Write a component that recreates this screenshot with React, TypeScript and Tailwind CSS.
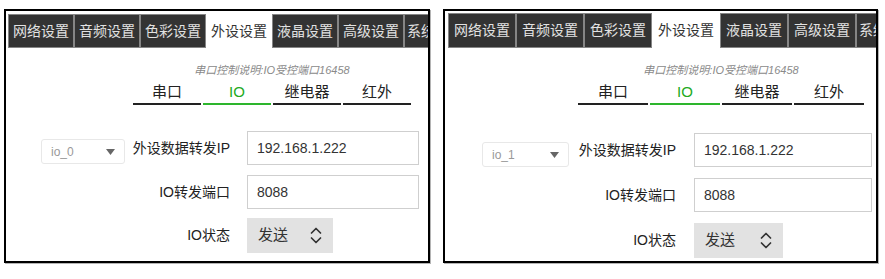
import React from "react";

type Cfg = {
  outer: string;
  tabsWrap: string;
  tab: string;
  tabH: string;
  block: string;
  subTab: string;
  subGap: string;
  form: string;
  row2: string;
  row3: string;
  select: string;
  label: string;
  input: string;
  inputGap: string;
  state: string;
  io: string;
};

const LEFT: Cfg = {
  outer: "w-[426px] h-[254px]",
  tabsWrap: "pt-[3px] pl-[2px]",
  tab: "w-[66px]",
  tabH: "h-[34px]",
  block: "ml-[127px] w-[278px]",
  subTab: "w-[68px]",
  subGap: "gap-[2px]",
  form: "mt-[26px]",
  row2: "mt-[10px]",
  row3: "mt-[9px]",
  select: "ml-[35px] w-[84px] mb-[1px]",
  label: "w-[105px]",
  input: "w-[172px]",
  inputGap: "ml-[17px]",
  state: "w-[86px] h-[35px]",
  io: "io_0",
};

const RIGHT: Cfg = {
  outer: "w-[435px] h-[254px]",
  tabsWrap: "pt-[2px] pl-[3px]",
  tab: "w-[68px]",
  tabH: "h-[35px]",
  block: "ml-[133px] w-[286px]",
  subTab: "w-[70px]",
  subGap: "gap-[2px]",
  form: "mt-[28px]",
  row2: "mt-[11px]",
  row3: "mt-[11px]",
  select: "ml-[37px] w-[87px]",
  label: "w-[107px]",
  input: "w-[178px]",
  inputGap: "ml-[18px]",
  state: "w-[89px] h-[35px]",
  io: "io_1",
};

const TABS = ["网络设置", "音频设置", "色彩设置", "外设设置", "液晶设置", "高级设置"];
const SUBS = ["串口", "IO", "继电器", "红外"];

function UpDown() {
  return (
    <svg width="12" height="17" viewBox="0 0 12 17" fill="none">
      <path d="M1.5 6 L6 1.5 L10.5 6" stroke="#333" strokeWidth="1.7" strokeLinecap="round" strokeLinejoin="round" />
      <path d="M1.5 11 L6 15.5 L10.5 11" stroke="#333" strokeWidth="1.7" strokeLinecap="round" strokeLinejoin="round" />
    </svg>
  );
}

function Panel({ c }: { c: Cfg }) {
  return (
    <div className={`${c.outer} shrink-0 border-2 border-black bg-white shadow-[1px_1px_0_#b4b4b4] overflow-hidden`}>
      <div className={`${c.tabsWrap} flex overflow-hidden whitespace-nowrap`}>
        {TABS.map((t) => {
          const active = t === "外设设置";
          return (
            <div
              key={t}
              className={`${c.tab} ${c.tabH} shrink-0 flex items-center justify-center text-[14px] ${
                active ? "bg-white text-[#333]" : "bg-[#333333] text-[#e2e2e2] border border-[#858585]"
              }`}
            >
              {t}
            </div>
          );
        })}
        <div
          className={`${c.tabH} flex-1 min-w-0 overflow-hidden flex items-center pl-[2px] text-[14px] bg-[#333333] text-[#e2e2e2] border border-r-0 border-[#858585]`}
        >
          <span className="shrink-0">系统</span>
        </div>
      </div>

      <div className={`${c.block} mt-[14px]`}>
        <div className="text-center text-[11px] leading-[16px] italic text-[#8a8a8a]">
          串口控制说明:IO受控端口16458
        </div>
        <div className={`flex ${c.subGap}`}>
          {SUBS.map((s) => {
            const active = s === "IO";
            return (
              <div
                key={s}
                className={`${c.subTab} h-[27px] flex items-end justify-center pb-[1px] text-[15px] leading-[20px] border-b-2 ${
                  active ? "border-[#2db52d] text-[#22aa22]" : "border-[#222] text-[#222]"
                }`}
              >
                {s}
              </div>
            );
          })}
        </div>
      </div>

      <div className={`${c.form} flex flex-col`}>
        <div className="flex items-center">
          <div
            className={`${c.select} self-end h-[25px] border border-[#e8e8e8] rounded-[3px] flex items-center justify-between pl-[9px] pr-[9px] text-[12px] text-[#999]`}
          >
            <span>{c.io}</span>
            <svg width="9" height="6" viewBox="0 0 9 6">
              <path d="M0 0 H9 L4.5 6 Z" fill="#666" />
            </svg>
          </div>
          <div className={`${c.label} text-right text-[14px] text-[#222]`}>外设数据转发IP</div>
          <div className={`${c.inputGap} ${c.input} h-[34px] border border-[#cfcfcf] flex items-center pl-[9px] text-[14px] text-[#333]`}>
            192.168.1.222
          </div>
        </div>

        <div className={`flex items-center ${c.row2}`}>
          <div className={`${c.select} invisible h-[25px]`} />
          <div className={`${c.label} text-right text-[14px] text-[#222]`}>IO转发端口</div>
          <div className={`${c.inputGap} ${c.input} h-[34px] border border-[#cfcfcf] flex items-center pl-[9px] text-[14px] text-[#333]`}>
            8088
          </div>
        </div>

        <div className={`flex items-center ${c.row3}`}>
          <div className={`${c.select} invisible h-[25px]`} />
          <div className={`${c.label} text-right text-[14px] text-[#222]`}>IO状态</div>
          <div className={`${c.inputGap} ${c.state} bg-[#e2e2e2] flex items-center justify-between pl-[11px] pr-[11px] text-[15px] text-[#333]`}>
            <span>发送</span>
            <UpDown />
          </div>
        </div>
      </div>
    </div>
  );
}

export default function App() {
  return (
    <div className="w-[885px] h-[279px] bg-white flex items-start pt-[9px] pl-[4px] gap-[13px] font-['Liberation_Sans','Noto_Sans_CJK_SC',sans-serif]">
      <Panel c={LEFT} />
      <Panel c={RIGHT} />
    </div>
  );
}
